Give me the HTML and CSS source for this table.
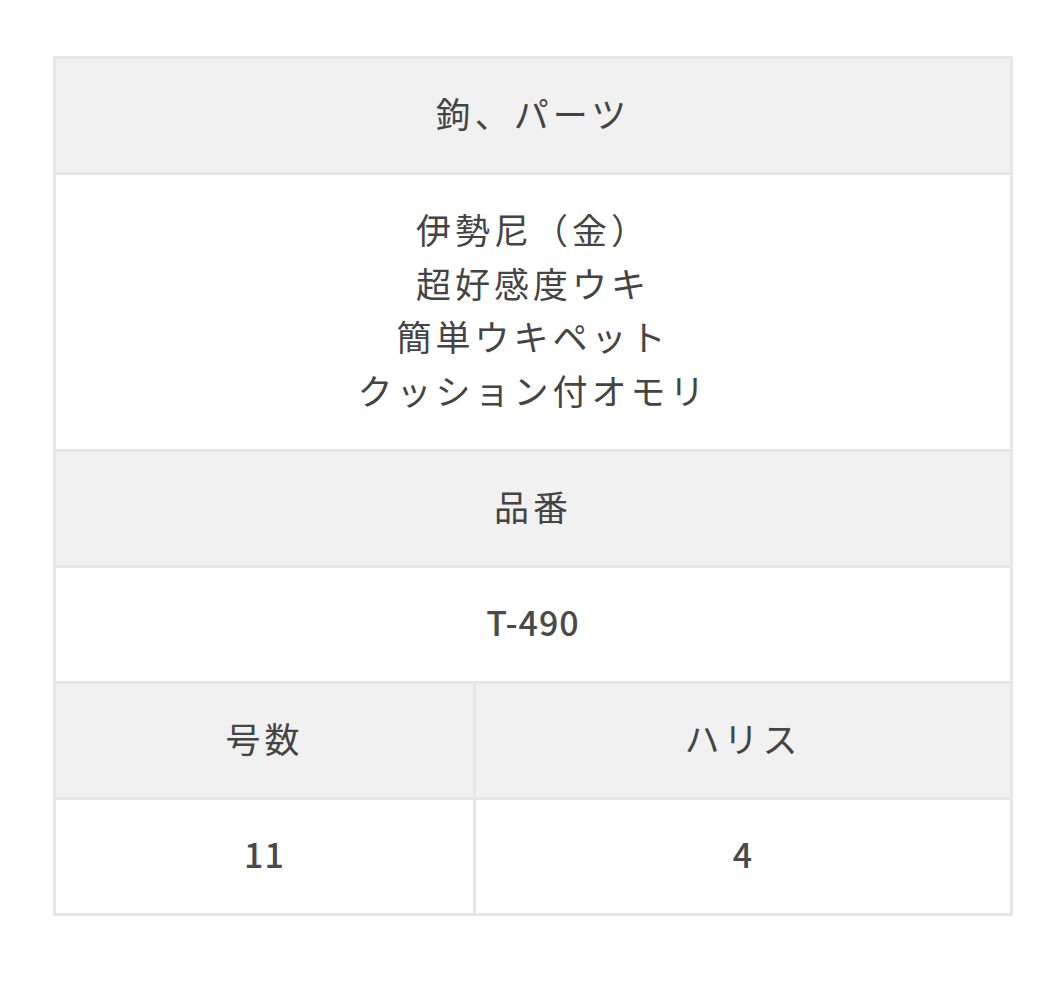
FILE: index.html
```html
<!DOCTYPE html>
<html lang="ja">
<head>
<meta charset="utf-8">
<link rel="stylesheet" href="styles.css">
</head>
<body>
<div class="wrap">
<table class="spec">
  <colgroup><col class="c1"><col class="c2"></colgroup>
  <tr class="head"><th colspan="2">鉤、パーツ</th></tr>
  <tr><td colspan="2">伊勢尼（金）<br>超好感度ウキ<br>簡単ウキペット<br>クッション付オモリ</td></tr>
  <tr class="head"><th colspan="2">品番</th></tr>
  <tr><td colspan="2" class="num">T-490</td></tr>
  <tr class="head"><th>号数</th><th>ハリス</th></tr>
  <tr><td class="num">11</td><td class="num">4</td></tr>
</table>
</div>
</body>
</html>
```
FILE: styles.css
```css
html, body { margin: 0; padding: 0; background: #fff; }
.wrap { padding: 56px 41px 0 53px; }
.spec {
  width: 960px;
  border-collapse: collapse;
  table-layout: fixed;
  font-family: "Noto Sans CJK JP", "Noto Sans", sans-serif;
  color: #444;
  font-size: 35px;
  letter-spacing: 4px;
  line-height: 53.5px;
}
.c1 { width: 420px; }
.spec th, .spec td {
  border: 3px solid #e6e6e6;
  text-align: center;
  padding: 27px 0 32.5px;
  font-weight: 400;
}
.spec .head th { background: #f1f1f1; }
.spec td.num { font-weight: 500; letter-spacing: 1px; font-size: 34px; color: #4a4a4a; }
```
